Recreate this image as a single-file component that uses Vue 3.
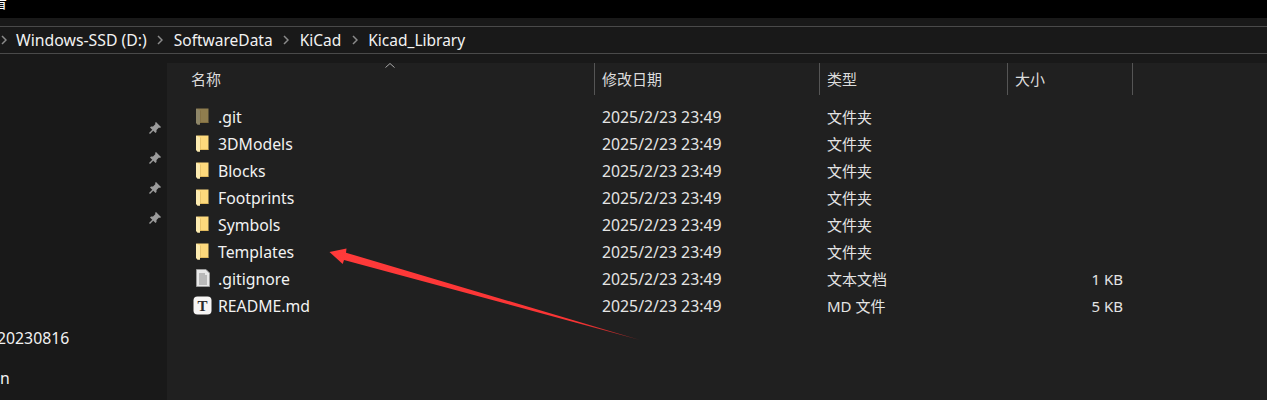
<script setup>
const crumbs = ['Windows-SSD (D:)', 'SoftwareData', 'KiCad', 'Kicad_Library']
const pins = [1, 2, 3, 4]
const files = [
  { name: '.git', icon: 'git', type: '文件夹', size: '' },
  { name: '3DModels', icon: 'folder', type: '文件夹', size: '' },
  { name: 'Blocks', icon: 'folder', type: '文件夹', size: '' },
  { name: 'Footprints', icon: 'folder', type: '文件夹', size: '' },
  { name: 'Symbols', icon: 'folder', type: '文件夹', size: '' },
  { name: 'Templates', icon: 'folder', type: '文件夹', size: '' },
  { name: '.gitignore', icon: 'doc', type: '文本文档', size: '1 KB' },
  { name: 'README.md', icon: 'md', type: 'MD 文件', size: '5 KB' },
]
</script>

<template>
  <div class="window">
    <div class="titlebar"><span class="title-text">看</span></div>
    <div class="gap"></div>
    <nav class="address">
      <svg class="chev first" width="6" height="10" viewBox="0 0 6 10"><path d="M1 1L5 5L1 9" /></svg>
      <template v-for="(c, i) in crumbs" :key="c">
        <span class="crumb">{{ c }}</span>
        <svg v-if="i < crumbs.length - 1" class="chev" width="6" height="10" viewBox="0 0 6 10"><path d="M1 1L5 5L1 9" /></svg>
      </template>
    </nav>
    <div class="body">
      <aside class="sidebar">
        <div class="pins">
          <svg v-for="p in pins" :key="p" class="pin" width="14" height="14" viewBox="0 0 14 14">
            <path d="M8 1L13 6L12 7L11 6.500L8.500 9L8.500 11L7.500 12L2 6.500L3 5.500L5 5.500L7.500 3L7 2Z" fill="#9b9b9b" />
            <path d="M5 9L1.500 12.500" stroke="#9b9b9b" stroke-width="1.500" />
          </svg>
        </div>
        <div class="side-label one">20230816</div>
        <div class="side-label two">n</div>
      </aside>
      <main class="main">
        <div class="head">
          <div class="hcell name">名称<svg class="sort" width="10" height="5" viewBox="0 0 10 5"><path d="M0.500 4.500L5 0.500L9.500 4.500" /></svg></div>
          <div class="hcell">修改日期</div>
          <div class="hcell">类型</div>
          <div class="hcell">大小</div>
        </div>
        <div class="list">
          <div v-for="f in files" :key="f.name" class="row">
            <div class="cell namecell">
              <svg v-if="f.icon === 'folder' || f.icon === 'git'" class="icon" :class="{ dim: f.icon === 'git' }" width="13" height="17" viewBox="0 0 13 17">
                <path d="M0.500 0.500H12.500V14.500H0.500Z" fill="#fdd97c" />
                <path d="M4 14H12.500V15H4Z" fill="#e2bb5e" />
                <path d="M4 2.500H5V14H4Z" fill="#e9c46a" />
                <path d="M0 0.500L4 2.500V16.800H1.500L0 15Z" fill="#fcebb0" />
              </svg>
              <svg v-else-if="f.icon === 'doc'" class="icon doc" width="14" height="18" viewBox="0 0 14 18">
                <path d="M0.500 0.500H10L13.500 4V17.500H0.500Z" fill="#e8e8e8" stroke="#9a9a9a" />
                <path d="M3 5H9M3 7H11M3 9H11M3 11H11M3 13H11M3 15H11" stroke="#8a8a8a" />
              </svg>
              <svg v-else class="icon md" width="19" height="19" viewBox="0 0 19 19">
                <rect x="0.500" y="0.500" width="18" height="18" rx="4" fill="#f7f5f4" />
                <text class="md-t" x="9.500" y="14.500" text-anchor="middle">T</text>
              </svg>
              <span>{{ f.name }}</span>
            </div>
            <div class="cell date">2025/2/23 23:49</div>
            <div class="cell type">{{ f.type }}</div>
            <div class="cell size">{{ f.size }}</div>
          </div>
        </div>
      </main>
    </div>
    <svg class="arrow" width="320" height="100" viewBox="325 245 320 100">
      <defs>
        <linearGradient id="arrowFade" gradientUnits="userSpaceOnUse" x1="330" y1="252" x2="638" y2="339">
          <stop offset="0" stop-color="#ff3a3a" />
          <stop offset="0.800" stop-color="#fa3434" />
          <stop offset="1" stop-color="#9a2626" />
        </linearGradient>
      </defs>
      <path d="M329.500 252L346.500 248.500L346 252.700L640 340L344 260L342.700 264Z" fill="url(#arrowFade)" />
    </svg>
  </div>
</template>

<style>
html, body { background: #202020; overflow: hidden; }
</style>

<style scoped>
.window {
  position: relative;
  width: 1267px;
  height: 400px;
  overflow: hidden;
  background: #191919;
  color: #f2f2f2;
  font-family: "Noto Sans", "Noto Sans CJK SC", sans-serif;
  font-size: 15.800px;
}
.titlebar {
  height: 18px;
  background: #000;
  overflow: hidden;
  color: #fff;
  font-family: "Noto Sans CJK SC", sans-serif;
  font-size: 15px;
  line-height: 15px;
}
.title-text { display: block; margin: -6px 0 0 -8px; }
.gap { height: 8px; background: #191919; }
.address {
  display: flex;
  align-items: center;
  height: 26px;
  border-top: 1px solid #4a4a4a;
  border-bottom: 1px solid #4a4a4a;
  background: #191919;
  padding-left: 1px;
  line-height: 26px;
}
.chev { flex: none; margin: 0 10.500px; }
.chev.first { margin: 0 9px 0 0; }
.chev path { fill: none; stroke: #8b8b8b; stroke-width: 1.500; }
.crumb { white-space: nowrap; font-size: 15.500px; }
.crumb:first-of-type { font-size: 15.800px; }
.body {
  display: flex;
  height: 346px;
}
.sidebar {
  width: 167px;
  flex: none;
  background: #191919;
  display: flex;
  flex-direction: column;
}
.pins {
  display: flex;
  flex-direction: column;
  align-items: flex-end;
  gap: 16px;
  padding: 67px 5px 0 0;
}
.pin { display: block; }
.side-label { line-height: 20px; }
.side-label.one { margin: 103px 0 0 -3px; }
.side-label.two { margin-top: 20px; }
.main {
  flex: 1;
  margin-top: 9px;
  background: #202020;
  padding-left: 21px;
}
.head {
  display: grid;
  grid-template-columns: 407px 225px 188px 125px;
  height: 32px;
  font-size: 15px;
}
.hcell {
  position: relative;
  padding-left: 9px;
  margin-left: -2px;
  line-height: 33px;
  height: 32px;
  border-right: 1px solid #555;
  color: #dcdcdc;
  white-space: nowrap;
}
.hcell.name { padding-left: 3px; margin-left: 0; }
.sort {
  position: absolute;
  left: 197px;
  top: 0;
}
.sort path { fill: none; stroke: #a8a8a8; stroke-width: 1; }
.list { padding-top: 9px; }
.row {
  display: grid;
  grid-template-columns: 407px 225px 188px 125px;
  height: 27px;
  line-height: 27px;
  white-space: nowrap;
}
.namecell {
  display: flex;
  align-items: center;
  position: relative;
  padding-left: 30px;
}
.icon {
  position: absolute;
  left: 8px;
  top: 4px;
}
.icon.dim { opacity: 0.5; }
.icon.doc { top: 3px; }
.icon.md { left: 5px; top: 3px; }
.md-t {
  font-family: "Liberation Serif", serif;
  font-size: 15px;
  font-weight: 700;
  fill: #2b2b2b;
}
.date { padding-left: 7px; color: #e4e4e4; }
.type { padding-left: 7px; color: #e4e4e4; font-size: 15px; }
.size { text-align: right; padding-right: 10px; color: #e4e4e4; font-size: 15px; }
.arrow {
  position: absolute;
  left: 325px;
  top: 245px;
  pointer-events: none;
}
</style>
